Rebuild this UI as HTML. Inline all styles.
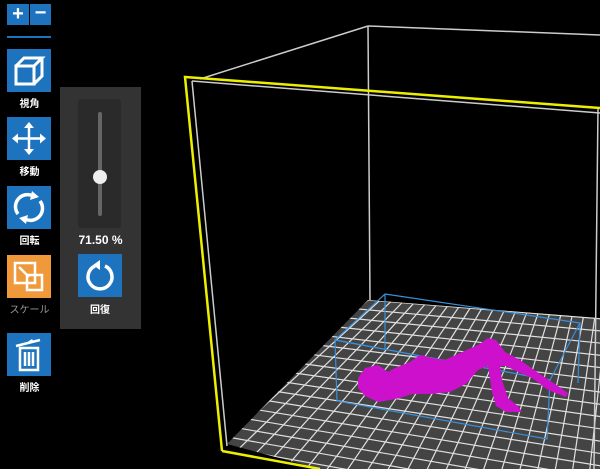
<!DOCTYPE html>
<html style="overflow:hidden"><head><meta charset="utf-8"><style>
body{margin:0;width:600px;height:469px;background:#000;overflow:hidden;position:relative;font-family:"Liberation Sans","Noto Sans CJK JP",sans-serif}
.b{position:absolute;background:#1e73be;width:44px;height:43px;left:7px}
.l{position:absolute;left:0;width:59px;text-align:center;color:#fff;font-size:10px;font-weight:bold}
svg{position:absolute;left:0;top:0}
</style></head><body>
<svg width="600" height="469">
<defs><clipPath id="fl"><polygon points="368,300 600,318 600,469 320,469 227,444"/></clipPath></defs>
<polygon points="368,300 600,318 600,469 320,469 227,444" fill="#444"/>
<g clip-path="url(#fl)" stroke="#e0e0e0" stroke-width="1.2" id="g"></g>
<line x1="368" y1="26" x2="370" y2="300" stroke="#ccc" stroke-width="1.5"/>
<line x1="368" y1="26" x2="600" y2="35" stroke="#ccc" stroke-width="1.5"/>
<line x1="200" y1="79" x2="368" y2="26" stroke="#ccc" stroke-width="1.5"/>
<line x1="192" y1="81" x2="600" y2="113" stroke="#ccc" stroke-width="1.5"/>
<line x1="192" y1="81" x2="227" y2="446" stroke="#ccc" stroke-width="1.5"/>
<line x1="598" y1="108" x2="594" y2="469" stroke="#ccc" stroke-width="1.5"/>
<polyline points="222,451 320,469" stroke="#ee0" stroke-width="2.5" fill="none"/>
<polyline points="600,108 185,77 222,451" stroke="#ee0" stroke-width="2.5" fill="none"/>
<g stroke="#3a8fd8" stroke-width="1.2" fill="none">
<polygon points="385,294 580,323 550,380 335,340"/>
<polygon points="335,340 550,380 547,439 337,401"/>
<line x1="385" y1="294" x2="385" y2="350"/>
<line x1="580" y1="323" x2="578" y2="383"/>
</g>
<g fill="#cc10cc">
<polygon points="358,378 365,368 378,365 388,372 395,368 410,362 420,355 432,358 445,360 462,352 478,345 488,338 496,340 505,352 520,360 540,374 558,386 568,393 566,397 548,390 532,378 518,372 506,366 500,366 502,380 508,398 518,406 522,412 506,412 496,406 492,392 488,366 478,370 466,384 450,392 430,394 412,394 400,398 390,400 378,402 365,396 358,388"/>
</g>
</svg>
<div class="b" style="top:4px;width:22px;height:21px;color:#fff;font-size:20px;font-weight:bold;text-align:center;line-height:20px">+</div>
<div class="b" style="top:4px;left:30px;width:21px;height:21px;color:#fff;font-size:20px;font-weight:bold;text-align:center;line-height:19px">−</div>
<div style="position:absolute;left:7px;top:36px;width:44px;height:2px;background:#1e73be"></div>
<div class="b" style="top:49px"><svg width="44" height="43"><g stroke="#fff" stroke-width="3" fill="none"><path d="M9 17 h18 v18 h-18z M9 17 l8-8 h18 l-8 8 M35 9 v18 l-8 8"/></g></svg></div>
<div class="l" style="top:95px">視角</div>
<div class="b" style="top:117px"><svg width="44" height="43"><g stroke="#fff" stroke-width="2.5" fill="#fff"><path d="M22 7 v29 M7 21.5 h30" fill="none"/><path d="M22 5 l-5 6 h10z M22 38 l-5-6 h10z M5 21.5 l6-5 v10z M39 21.5 l-6-5 v10z" stroke="none"/></g></svg></div>
<div class="l" style="top:163px">移動</div>
<div class="b" style="top:186px"><svg width="44" height="43"><g stroke="#fff" stroke-width="3.5" fill="none"><path d="M11 28 A12 12 0 0 1 26 10"/><path d="M33 15 A12 12 0 0 1 18 33"/></g><path d="M25 5 l7 6 l-9 3z M19 38 l-7-6 l9-3z" fill="#fff"/></svg></div>
<div class="l" style="top:232px">回転</div>
<div class="b" style="top:255px;background:#f0993a"><svg width="44" height="43"><g stroke="#fff" stroke-width="2.5" fill="none"><rect x="8" y="8" width="20" height="20"/><rect x="20" y="20" width="15" height="15"/><path d="M12 12 l10 10"/></g></svg></div>
<div class="l" style="top:301px;color:#999;font-weight:normal">スケール</div>
<div class="b" style="top:333px"><svg width="44" height="43"><g stroke="#fff" stroke-width="2.5" fill="none"><rect x="13" y="15" width="18" height="22"/><path d="M18 19v14M22 19v14M26 19v14M9 13 l24-6"/></g><path d="M19 10 l6-4 l2 3z" fill="#fff"/></svg></div>
<div class="l" style="top:379px">削除</div>
<div style="position:absolute;left:60px;top:87px;width:81px;height:242px;background:#333"></div>
<div style="position:absolute;left:78px;top:99px;width:43px;height:129px;background:#2a2a2a;border-radius:3px"></div>
<div style="position:absolute;left:98px;top:112px;width:4px;height:104px;background:#666;border-radius:2px"></div>
<div style="position:absolute;left:93px;top:170px;width:14px;height:14px;background:#eee;border-radius:50%"></div>
<div style="position:absolute;left:60px;top:233px;width:81px;text-align:center;color:#fff;font-size:12px;font-weight:bold">71.50 %</div>
<div class="b" style="left:78px;top:254px"><svg width="44" height="43"><path d="M17 12 A12 12 0 1 0 27 12" stroke="#fff" stroke-width="3.5" fill="none"/><path d="M22 6 l-7 5 l7 5z" fill="#fff"/></svg></div>
<div class="l" style="left:78px;width:44px;top:301px">回復</div>
<script>
var g=document.getElementById('g'),s='';
function L(a,b,c,d){s+='<line x1="'+a+'" y1="'+b+'" x2="'+c+'" y2="'+d+'"/>';}
var P=[[368,300],[640,322],[640,560],[170,470]];
function pt(u,v){var x=(1-u)*(1-v)*P[0][0]+u*(1-v)*P[1][0]+u*v*P[2][0]+(1-u)*v*P[3][0];var y=(1-u)*(1-v)*P[0][1]+u*(1-v)*P[1][1]+u*v*P[2][1]+(1-u)*v*P[3][1];return[x,y];}
for(var i=0;i<=24;i++){var u=i/24,a=pt(u,0),b=pt(u,1);L(a[0],a[1],b[0],b[1]);}
for(var j=0;j<=19;j++){var v=j/19,a=pt(0,v),b=pt(1,v);L(a[0],a[1],b[0],b[1]);}
g.innerHTML=s;
</script>
</body>
</html>
